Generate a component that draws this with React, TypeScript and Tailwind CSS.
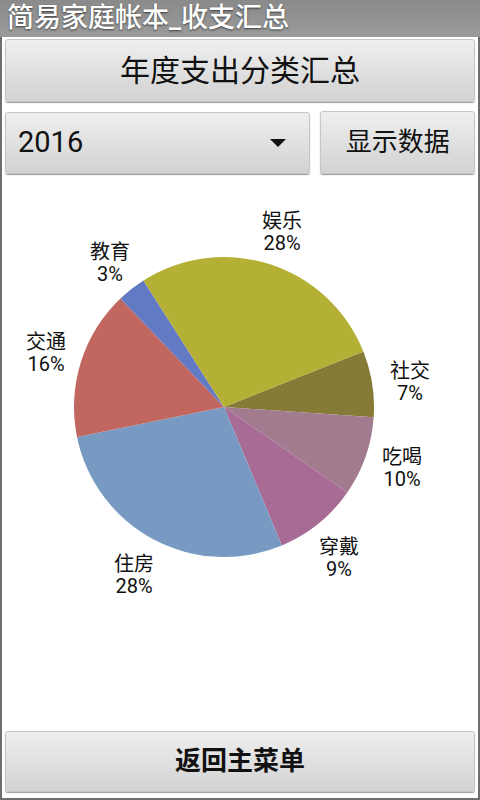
const CX = 224;
const CY = 407;
const R = 150;

const slices = [
  { from: -21.7, to: 3.9, color: "#857a36" },
  { from: 3.9, to: 34.7, color: "#a27b8f" },
  { from: 34.7, to: 67.3, color: "#a86b96" },
  { from: 67.3, to: 168.5, color: "#7899c2" },
  { from: 168.5, to: 226.3, color: "#c2675f" },
  { from: 226.3, to: 237.5, color: "#627ac3" },
  { from: 237.5, to: 338.3, color: "#b4b036" },
];

const labels = [
  { name: "娱乐", pct: "28%", x: 282, y: 221 },
  { name: "教育", pct: "3%", x: 110, y: 252 },
  { name: "交通", pct: "16%", x: 46, y: 342 },
  { name: "社交", pct: "7%", x: 410, y: 371 },
  { name: "吃喝", pct: "10%", x: 402, y: 457 },
  { name: "穿戴", pct: "9%", x: 339, y: 547 },
  { name: "住房", pct: "28%", x: 134, y: 564 },
];

const pt = (deg: number) => {
  const a = (deg * Math.PI) / 180;
  return `${(CX + R * Math.cos(a)).toFixed(2)} ${(CY + R * Math.sin(a)).toFixed(2)}`;
};

const slicePath = (from: number, to: number) =>
  `M ${CX} ${CY} L ${pt(from)} A ${R} ${R} 0 ${to - from > 180 ? 1 : 0} 1 ${pt(to)} Z`;

const btn =
  "rounded-[3px] border border-[#c6c6c6] bg-gradient-to-b from-[#efefef] to-[#d2d2d2] shadow-[0_1px_1px_rgba(0,0,0,0.4)] flex items-center text-[#111]";

const PieChart = () => (
  <svg width="476" height="557" viewBox="2 174 476 557" className="block">
    {slices.map((s, i) => (
      <path key={i} d={slicePath(s.from, s.to)} fill={s.color} />
    ))}
    {labels.map((l) => (
      <g key={l.name} fill="#111" fontSize="20" textAnchor="middle" dominantBaseline="central">
        <text x={l.x} y={l.y}>{l.name}</text>
        <text x={l.x} y={l.y + 22}>{l.pct}</text>
      </g>
    ))}
  </svg>
);

export default function App() {
  return (
    <div
      className="w-[480px] h-[800px] flex flex-col bg-white border-x-2 border-b-2 border-[#6e6e6e]"
      style={{ fontFamily: 'Roboto, "Noto Sans CJK SC", sans-serif' }}
    >
      <div className="h-[37px] -mx-[2px] px-[7px] flex items-center bg-gradient-to-b from-[#8a8a8a] to-[#9b9b9b] text-white text-[27px] font-medium leading-none [text-shadow:0_1px_2px_rgba(0,0,0,0.6)]">
        简易家庭帐本_收支汇总
      </div>

      <div className="px-[3px] pt-[2px]">
        <div className={`${btn} h-[63px] justify-center text-[30px]`}>年度支出分类汇总</div>

        <div className="mt-[9px] flex gap-[10px] items-start">
          <div className={`${btn} w-[306px] h-[62px] mt-[1px] justify-between pl-[12px] pr-[23px]`}>
            <span className="text-[29px]">2016</span>
            <span className="w-0 h-0 border-x-[8.5px] border-x-transparent border-t-[8px] border-t-[#111]" />
          </div>
          <div className={`${btn} w-[155px] h-[63px] justify-center text-[26px]`}>显示数据</div>
        </div>
      </div>

      <div className="h-[557px]">
        <PieChart />
      </div>

      <div className="px-[3px]">
        <div className={`${btn} h-[61px] justify-center text-[26px] font-bold`}>返回主菜单</div>
      </div>
    </div>
  );
}
